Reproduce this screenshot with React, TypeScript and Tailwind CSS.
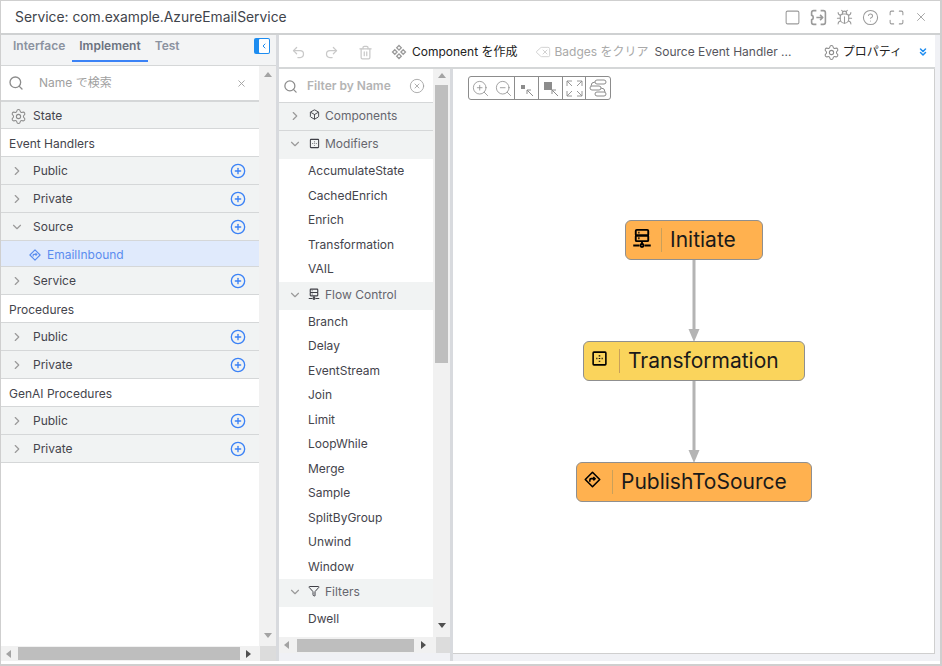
import type { ReactNode } from "react";
import { ChevronDown, ChevronRight, ChevronsDown, Maximize, Search, Settings, Trash2, Undo2, Redo2, X, CirclePlus, CircleHelp, Bug, Square, Delete, Box, Filter, CircleX, ZoomIn, ZoomOut } from "lucide-react";

function ServerIcon({ className = "" }: { className?: string }) {
  return (
    <svg viewBox="0 0 16 16" className={className} fill="none" stroke="currentColor" strokeWidth="1.5">
      <rect x="3" y="1.5" width="10" height="4.5" rx="0.8" />
      <rect x="3" y="6" width="10" height="4.5" rx="0.8" />
      <path d="M8 10.5v2.5M1 14h5M10 14h5" />
      <circle cx="8" cy="14" r="1.2" />
      <path d="M5 3.7h1M5 8.2h1" />
    </svg>
  );
}

function ModifierIcon({ className = "" }: { className?: string }) {
  return (
    <svg viewBox="0 0 16 16" className={className} fill="none" stroke="currentColor" strokeWidth="1.5">
      <rect x="2" y="2" width="12" height="12" rx="0.8" />
      <path d="M8 5v1M8 10v1M5 8h1M10 8h1M8 7.6v.8" />
    </svg>
  );
}

function DiamondIcon({ className = "" }: { className?: string }) {
  return (
    <svg viewBox="0 0 16 16" className={className} fill="none" stroke="currentColor" strokeWidth="1.5">
      <path d="M8 1.2 14.8 8 8 14.8 1.2 8Z" strokeLinejoin="round" />
      <path d="M5.5 10V8.4q0-1.2 1.2-1.2h3.5M8.8 5.6l1.6 1.6-1.6 1.6" />
    </svg>
  );
}

function ComponentsIcon({ className = "" }: { className?: string }) {
  return (
    <svg viewBox="0 0 16 16" className={className} fill="none" stroke="currentColor" strokeWidth="1.3">
      <path d="M8 1.5 10.3 3.8 8 6.1 5.7 3.8ZM3.8 5.7 6.1 8 3.8 10.3 1.5 8ZM12.2 5.7 14.5 8 12.2 10.3 9.9 8ZM8 9.9 10.3 12.2 8 14.5 5.7 12.2Z" />
    </svg>
  );
}

function SplitIcon({ className = "" }: { className?: string }) {
  return (
    <svg viewBox="0 0 16 16" className={className} fill="none" stroke="currentColor" strokeWidth="1.5" strokeLinejoin="round">
      <path d="M6 1.5H3.5q-2 0-2 2v2.5q1.5 0 1.5 2t-1.5 2v2.5q0 2 2 2H6" />
      <path d="M10 1.5h2.5q2 0 2 2v9q0 2-2 2H10" />
      <path d="M6 8h6M9.5 5.5 12 8l-2.5 2.5" />
    </svg>
  );
}

function ExpandRow({ label, open = false }: { label: string; open?: boolean }) {
  return (
    <div className="flex h-[28px] items-center border-b border-[#d5d7d8] bg-[#f1f3f3] pr-[13px] text-[#44444c]">
      <div className="flex w-[32px] justify-center text-[#9a9a9a]">
        {open ? <ChevronDown size={14} /> : <ChevronRight size={14} />}
      </div>
      <span className="flex-1">{label}</span>
      <CirclePlus size={16} className="text-[#3b82f6]" strokeWidth={2} />
    </div>
  );
}

function SectionRow({ label }: { label: string }) {
  return <div className="flex h-[28px] items-center border-b border-[#d5d7d8] bg-white pl-[8px] pt-[2px] text-[#44444c]">{label}</div>;
}

function PaletteHead({ label, open, icon }: { label: string; open?: boolean; icon: ReactNode }) {
  return (
    <div className={`flex h-[28px] items-center bg-[#f1f3f3] pb-[2px] text-[#66666e] ${open ? "" : "border-b border-[#d5d7d8]"}`}>
      <div className="flex w-[27px] justify-end pr-[4px] text-[#9a9a9a]">
        {open ? <ChevronDown size={14} /> : <ChevronRight size={14} />}
      </div>
      <div className="flex w-[16px] justify-center pb-[2px] text-[#3f3f46]">{icon}</div>
      <span className="ml-[3px]">{label}</span>
    </div>
  );
}

function PaletteItem({ label }: { label: string }) {
  return <div className="flex h-[24.5px] items-center pl-[29px] text-[#44444c]">{label}</div>;
}

function ScrollArrow({ dir, dark }: { dir: "up" | "down" | "left" | "right"; dark?: boolean }) {
  const color = dark ? "#505050" : "#a3a3a3";
  const pts = { up: "0,5 8,5 4,0", down: "0,0 8,0 4,5", left: "5,0 5,8 0,4", right: "0,0 0,8 5,4" }[dir];
  return (
    <svg width="8" height="8" viewBox="0 0 8 8">
      <polygon points={pts} fill={color} />
    </svg>
  );
}

function Node({ label, icon, bg, className }: { label: string; icon: ReactNode; bg: string; className: string }) {
  return (
    <div className={`absolute flex h-[40px] items-center rounded-[6px] border border-[#8f8f8f] text-[21px] text-[#1a1a1a] ${bg} ${className}`}>
      <div className="flex w-[35px] shrink-0 justify-center pb-[5px] pr-[4px] text-black">{icon}</div>
      <div className="mr-[8px] h-[24px] w-[1px] bg-[#c9a05a]" />
      <span>{label}</span>
    </div>
  );
}

export default function App() {
  return (
    <div className="flex h-[666px] w-[942px] flex-col overflow-hidden border-2 border-t border-l border-[#cfcfcf] bg-white font-['Inter','Noto_Sans_CJK_JP',sans-serif] text-[12px]">
      <div className="flex h-[34px] shrink-0 items-center border-b-2 border-[#cfd1d2] pl-[14px] pr-[12px]">
        <span className="flex-1 text-[13.85px] text-[#3f444b]">Service: com.example.AzureEmailService</span>
        <div className="flex items-center gap-[9px] text-[#9a9a9a]">
          <Square size={17} strokeWidth={1.5} />
          <SplitIcon className="h-[17px] w-[17px]" />
          <Bug size={17} strokeWidth={1.5} />
          <CircleHelp size={17} strokeWidth={1.5} />
          <Maximize size={17} strokeWidth={1.5} />
          <X size={14} strokeWidth={1.5} />
        </div>
      </div>

      <div className="flex min-h-0 flex-1 pb-[3px]">
        {/* left panel */}
        <div className="box-content flex w-[275px] shrink-0 flex-col border-r-[3px] border-[#d8dade]">
          <div className="flex h-[31px] shrink-0 items-center border-b border-[#d5d7d8] bg-[#f3f4f5] pb-[8px] pl-[12px] pr-[6px] text-[12px] font-semibold text-[#8b92a0]">
            <span>Interface</span>
            <div className="relative ml-[14px] flex h-full items-center text-[#6b7280]">
              Implement
              <div className="absolute -bottom-[5px] -left-[7px] -right-[7px] h-[2px] bg-[#3b82f6]" />
            </div>
            <span className="ml-[14px] flex-1">Test</span>
            <div className="flex h-[16px] w-[16px] items-center justify-end rounded-[2px] bg-[#1d8cf0] pr-[1px] text-white">
              <div className="flex h-[14px] w-[10px] items-center justify-center rounded-[1px] bg-white text-[#1d8cf0]">
                <ChevronRight size={8} strokeWidth={3} className="rotate-180" />
              </div>
            </div>
          </div>
          <div className="flex min-h-0 flex-1">
            <div className="flex-1 overflow-hidden">
              <div className="flex h-[36px] items-center border-b-2 border-[#d5d7d8] bg-white pr-[12px]">
                <Search size={16} className="ml-[7px] text-[#8c8c8c]" />
                <span className="ml-[15px] flex-1 text-[#a0a0a0]">Name で検索</span>
                <X size={11} className="text-[#a0a0a0]" />
              </div>
              <div className="flex h-[27px] items-center border-b border-[#d5d7d8] bg-[#f1f3f3] pt-[2px] text-[#44444c]">
                <Settings size={17} strokeWidth={1.5} className="ml-[9px] mr-[6px] text-[#8c8c8c]" />
                State
              </div>
              <SectionRow label="Event Handlers" />
              <ExpandRow label="Public" />
              <ExpandRow label="Private" />
              <ExpandRow label="Source" open />
              <div className="flex h-[26px] items-center border-b border-[#d5d7d8] bg-[#e0eafc] pt-[2px] text-[#5b8def]">
                <DiamondIcon className="ml-[28px] mr-[6px] h-[12px] w-[12px]" />
                EmailInbound
              </div>
              <ExpandRow label="Service" />
              <SectionRow label="Procedures" />
              <ExpandRow label="Public" />
              <ExpandRow label="Private" />
              <SectionRow label="GenAI Procedures" />
              <ExpandRow label="Public" />
              <ExpandRow label="Private" />
            </div>
            <div className="flex w-[17px] shrink-0 flex-col items-center justify-between bg-[#f1f1f1] pb-[5px] pt-[6px]">
              <ScrollArrow dir="up" />
              <ScrollArrow dir="down" />
            </div>
          </div>
          <div className="flex h-[15px] shrink-0 items-center bg-[#f1f1f1]">
            <div className="flex w-[17px] justify-center"><ScrollArrow dir="left" /></div>
            <div className="h-[13px] w-[222px] bg-[#bebebe]" />
            <div className="flex w-[20px] justify-center"><ScrollArrow dir="right" dark /></div>
            <div className="h-full flex-1 bg-[#dcdcdc]" />
          </div>
        </div>

        {/* right panel */}
        <div className="flex min-w-0 flex-1 flex-col border-r-[5px] border-[#f0f1f5] bg-[#f0f1f5]">
          <div className="flex h-[34px] shrink-0 items-center border-b-2 border-[#d5d7d8] bg-white pr-[6px] pt-[2px] text-[#3f3f46]">
            <Undo2 size={15} className="ml-[12px] text-[#c9c9c9]" />
            <Redo2 size={15} className="ml-[18px] text-[#c9c9c9]" />
            <Trash2 size={15} className="ml-[19px] text-[#c9c9c9]" />
            <ComponentsIcon className="ml-[18px] h-[16px] w-[16px] text-[#9a9a9a]" />
            <span className="ml-[5px] text-[#222]">Component を作成</span>
            <Delete size={16} strokeWidth={1.4} className="ml-[17px] text-[#cfcfcf]" />
            <span className="ml-[4px] text-[#a9a9a9]">Badges をクリア</span>
            <span className="ml-[6px] flex-1 text-[#55555c]">Source Event Handler ...</span>
            <Settings size={17} strokeWidth={1.5} className="mr-[3px] text-[#8c8c8c]" />
            <span className="text-[#222]">プロパティ</span>
            <ChevronsDown size={12} strokeWidth={3} className="ml-[15px] text-[#1d8cf0]" />
          </div>
          <div className="flex min-h-0 flex-1">
            <div className="box-content flex w-[171px] shrink-0 flex-col border-r-[3px] border-[#d8dade]">
              <div className="flex min-h-0 flex-1">
                <div className="min-w-0 flex-1 overflow-hidden bg-white">
                  <div className="flex h-[34px] items-center border-b border-[#d5d7d8] pl-[4px] pr-[8px] pt-[1px]">
                    <Search size={15} className="text-[#8c8c8c]" />
                    <span className="ml-[9px] flex-1 font-semibold text-[#b4b4b4]">Filter by Name</span>
                    <CircleX size={16} strokeWidth={1.2} className="text-[#9a9a9a]" />
                  </div>
                  <PaletteHead label="Components" icon={<Box size={11} />} />
                  <PaletteHead label="Modifiers" open icon={<ModifierIcon className="h-[11px] w-[11px]" />} />
                  <PaletteItem label="AccumulateState" />
                  <PaletteItem label="CachedEnrich" />
                  <PaletteItem label="Enrich" />
                  <PaletteItem label="Transformation" />
                  <PaletteItem label="VAIL" />
                  <PaletteHead label="Flow Control" open icon={<ServerIcon className="h-[12px] w-[12px]" />} />
                  <PaletteItem label="Branch" />
                  <PaletteItem label="Delay" />
                  <PaletteItem label="EventStream" />
                  <PaletteItem label="Join" />
                  <PaletteItem label="Limit" />
                  <PaletteItem label="LoopWhile" />
                  <PaletteItem label="Merge" />
                  <PaletteItem label="Sample" />
                  <PaletteItem label="SplitByGroup" />
                  <PaletteItem label="Unwind" />
                  <PaletteItem label="Window" />
                  <PaletteHead label="Filters" open icon={<Filter size={12} />} />
                  <PaletteItem label="Dwell" />
                </div>
                <div className="flex w-[17px] shrink-0 flex-col items-center bg-[#f1f1f1]">
                  <div className="flex h-[16px] items-center"><ScrollArrow dir="up" /></div>
                  <div className="h-[278px] w-[13px] bg-[#bebebe]" />
                  <div className="flex-1" />
                  <div className="flex h-[20px] items-center"><ScrollArrow dir="down" dark /></div>
                </div>
              </div>
              <div className="flex h-[16px] shrink-0 items-center bg-[#f1f1f1]">
                <div className="flex w-[18px] justify-center"><ScrollArrow dir="left" /></div>
                <div className="h-[13px] w-[117px] bg-[#bebebe]" />
                <div className="flex w-[22px] justify-center"><ScrollArrow dir="right" dark /></div>
                <div className="h-full flex-1 bg-[#dcdcdc]" />
              </div>
              <div className="h-[8px] shrink-0 bg-[#f0f1f5]" />
            </div>

            {/* canvas */}
            <div className="relative mb-[7px] min-w-0 flex-1 border-b border-r border-[#cfcfcf] bg-white">
              <div className="absolute left-[15px] top-[7px] flex h-[24px] items-center rounded-[3px] border border-[#8c8c8c] bg-white text-[#8c8c8c]">
                <div className="flex h-full w-[23px] items-center justify-center"><ZoomIn size={19} strokeWidth={1} /></div>
                <div className="flex h-full w-[23px] items-center justify-center border-r border-[#8c8c8c]"><ZoomOut size={19} strokeWidth={1} /></div>
                <div className="flex h-full w-[24px] items-center justify-center border-r border-[#8c8c8c]">
                  <svg width="18" height="18" viewBox="0 0 18 18" fill="none" stroke="currentColor"><rect x="3" y="6" width="4" height="4" fill="#8c8c8c" stroke="none" /><path d="M9 11l6 6M9 11v4M9 11h4" /></svg>
                </div>
                <div className="flex h-full w-[23px] items-center justify-center">
                  <svg width="18" height="18" viewBox="0 0 18 18" fill="none" stroke="currentColor"><rect x="2" y="3" width="8" height="8" fill="#8c8c8c" stroke="none" /><path d="M10 11l6 6M10 11v4M10 11h4" /></svg>
                </div>
                <div className="flex h-full w-[24px] items-center justify-center border-x border-[#8c8c8c]">
                  <svg width="19" height="19" viewBox="0 0 19 19" fill="none" stroke="currentColor" strokeWidth="0.9"><path d="M2 7V2h5M2 2l5 5M12 2h5v5M17 2l-5 5M2 12v5h5M2 17l5-5M17 12v5h-5M17 17l-5-5" /></svg>
                </div>
                <div className="flex h-full w-[24px] items-center justify-center">
                  <svg width="20" height="20" viewBox="0 0 20 20" fill="none" stroke="currentColor"><rect x="7" y="2" width="11" height="4" rx="2" /><rect x="2" y="8" width="11" height="4" rx="2" /><rect x="7" y="14" width="11" height="4" rx="2" /><path d="M7 4q-4 0-4 4M13 10q4 0 4 4" /></svg>
                </div>
              </div>

              <svg className="absolute left-[231px] top-[189px]" width="20" height="240" viewBox="0 0 20 240" fill="none">
                <path d="M10 2v73M10 123v73" stroke="#b4b4b4" strokeWidth="3" />
                <polygon points="4.5,71 15.5,71 10,84" fill="#b4b4b4" />
                <polygon points="4.5,192 15.5,192 10,205" fill="#b4b4b4" />
              </svg>
              <Node label="Initiate" bg="bg-[#ffb14f]" className="left-[172px] top-[151px] w-[138px]" icon={<ServerIcon className="h-[20px] w-[20px]" />} />
              <Node label="Transformation" bg="bg-[#fad45c]" className="left-[130px] top-[272px] w-[222px]" icon={<ModifierIcon className="h-[17px] w-[17px]" />} />
              <Node label="PublishToSource" bg="bg-[#ffb14f]" className="left-[123px] top-[393px] w-[236px]" icon={<DiamondIcon className="h-[17px] w-[17px]" />} />
            </div>
          </div>
        </div>
      </div>
    </div>
  );
}
